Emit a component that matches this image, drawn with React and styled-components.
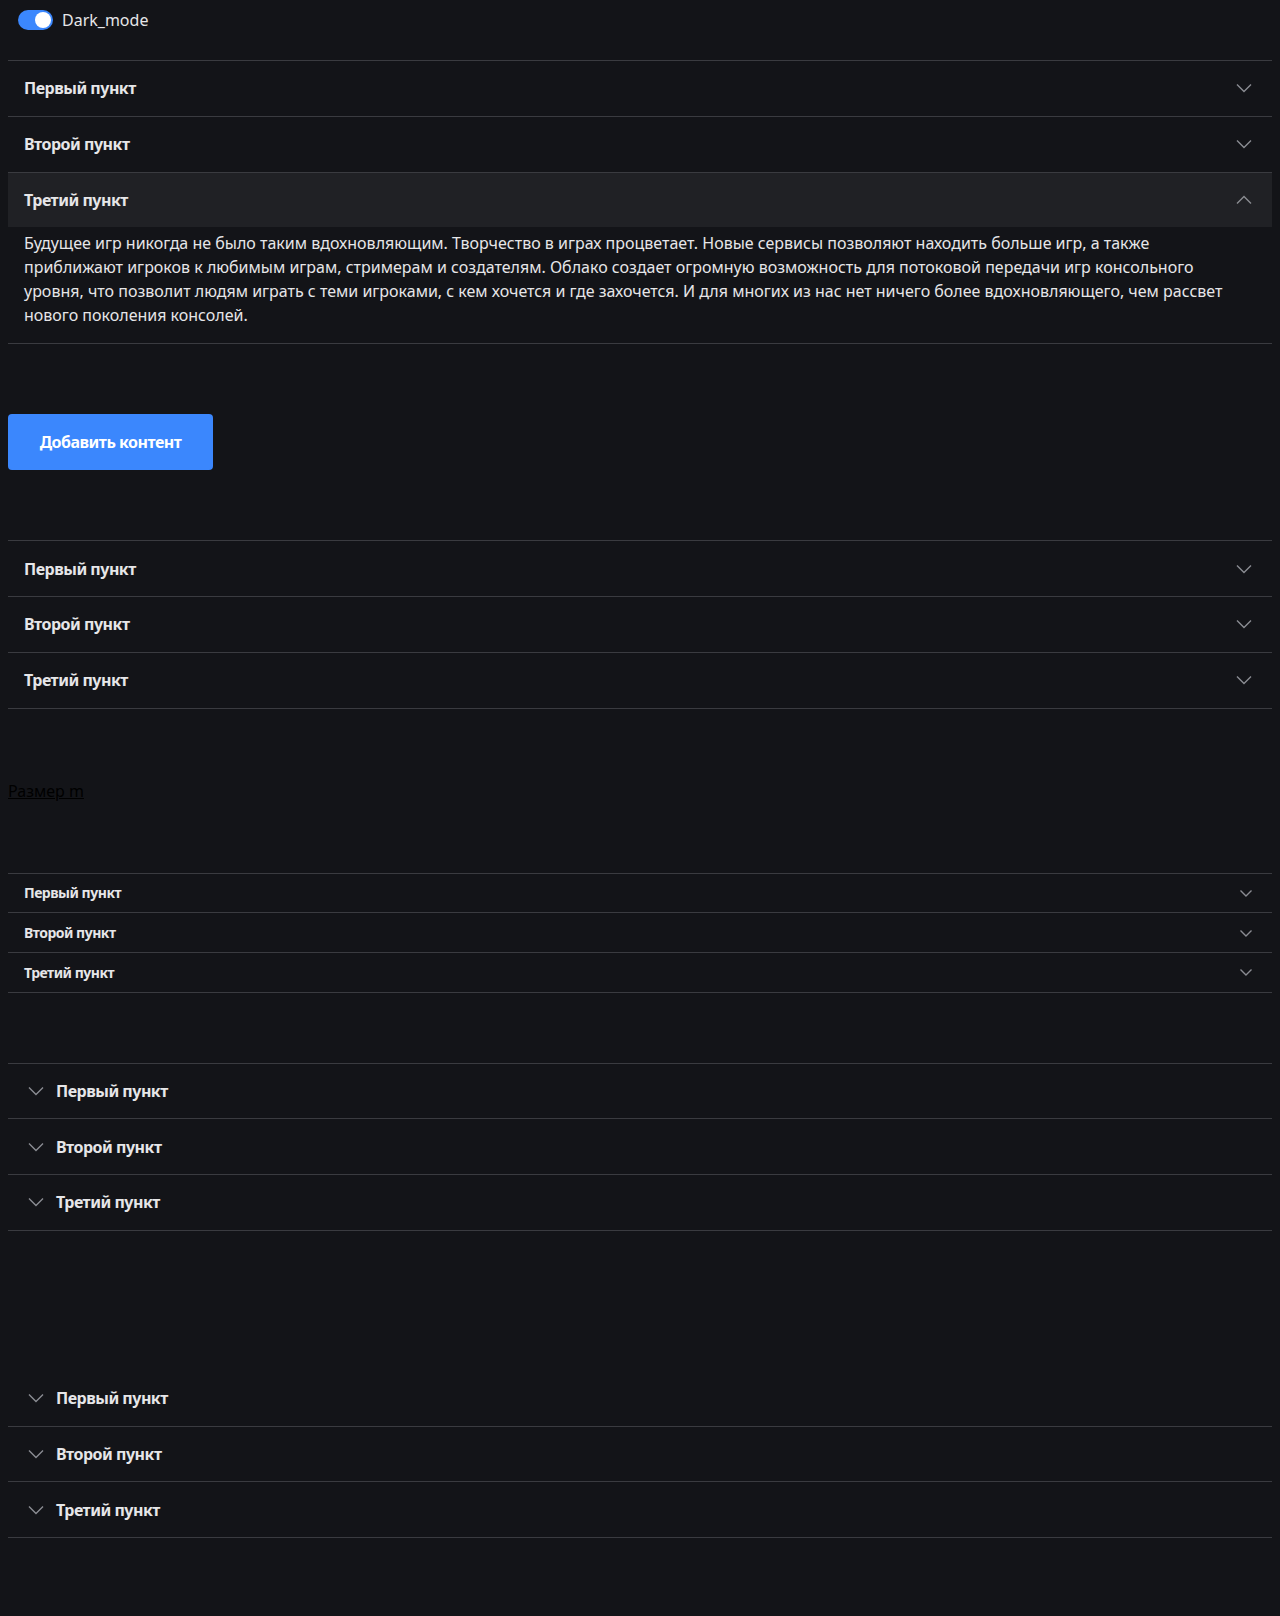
import React, { useState } from 'react';
import styled, { createGlobalStyle, css } from 'styled-components';

const GlobalStyle = createGlobalStyle`
  body {
    margin: 8px;
    background: #131418;
    color: #e6e6e8;
    font-family: "Noto Sans", "Open Sans", sans-serif;
  }
  * { box-sizing: border-box; }
`;

// --- Styled Components ---
const Page = styled.div`
  display: flex;
  flex-direction: column;
  gap: 70px;
  width: 1264px;
`;

const TopBar = styled.div`
  display: flex;
  align-items: flex-start;
  gap: 9px;
  height: 52px;
  padding: 2px 10px 0;
  margin-bottom: -70px;
`;

const Switch = styled.button`
  position: relative;
  width: 35px;
  height: 20px;
  border: none;
  border-radius: 10px;
  padding: 0;
  cursor: pointer;
  background: ${({ $on }) => ($on ? '#3b87fd' : '#4a4c52')};

  &::after {
    content: '';
    position: absolute;
    top: 2px;
    left: ${({ $on }) => ($on ? '17px' : '2px')};
    width: 16px;
    height: 16px;
    border-radius: 50%;
    background: #ffffff;
  }
`;

const SwitchLabel = styled.span`
  font-size: 16px;
  line-height: 20px;
  color: #e6e6e8;
`;

const List = styled.div`
  display: flex;
  flex-direction: column;
  border-top: ${({ $noTop }) => ($noTop ? 'none' : '1px solid #3a3b40')};
  margin-top: ${({ $extraTop }) => ($extraTop ? '70px' : '0')};
`;

const Item = styled.div`
  border-bottom: 1px solid #3a3b40;
`;

const Header = styled.button`
  display: flex;
  align-items: center;
  gap: 12px;
  width: 100%;
  border: none;
  cursor: pointer;
  text-align: left;
  font-family: inherit;
  font-weight: 700;
  letter-spacing: -0.5px;
  color: #e6e6e8;
  background: ${({ $open }) => ($open ? '#202125' : 'transparent')};
  height: ${({ $size }) => ($size === 's' ? '38.7px' : '54.75px')};
  font-size: ${({ $size }) => ($size === 's' ? '14px' : '16px')};
  padding: ${({ $iconLeft }) => ($iconLeft ? '0 20px' : '0 20px 0 16px')};
  ${({ $iconLeft }) =>
    $iconLeft &&
    css`
      flex-direction: row-reverse;
      justify-content: flex-end;
    `}
`;

const Title = styled.span`
  flex: ${({ $iconLeft }) => ($iconLeft ? '0 0 auto' : '1')};
`;

const Chevron = styled.svg`
  flex: 0 0 auto;
  transform: ${({ $open }) => ($open ? 'rotate(180deg)' : 'none')};
`;

const Content = styled.div`
  padding: 4px 40px 16px 16px;
  font-size: 16px;
  line-height: 24px;
  color: #e6e6e8;
`;

const PrimaryButton = styled.button`
  align-self: flex-start;
  width: 205px;
  height: 56px;
  border: none;
  border-radius: 4px;
  background: #3b87fd;
  color: #ffffff;
  font-family: inherit;
  font-size: 16px;
  font-weight: 700;
  letter-spacing: -0.5px;
  cursor: pointer;
`;

const SizeLink = styled.a`
  align-self: flex-start;
  font-size: 16px;
  line-height: 24px;
  color: #000000;
  text-decoration: underline;
`;
// --- End of Styled Components ---

const ITEMS = ['Первый пункт', 'Второй пункт', 'Третий пункт'];

const TEXT =
  'Будущее игр никогда не было таким вдохновляющим. Творчество в играх процветает. Новые сервисы позволяют находить больше игр, а также приближают игроков к любимым играм, стримерам и создателям. Облако создает огромную возможность для потоковой передачи игр консольного уровня, что позволит людям играть с теми игроками, с кем хочется и где захочется. И для многих из нас нет ничего более вдохновляющего, чем рассвет нового поколения консолей.';

const ChevronIcon = ({ size, open }) => {
  const s = size === 's' ? 12 : 16;
  const d = size === 's' ? 'M0.5 3.5 L6 9 L11.5 3.5' : 'M1 4.5 L8 11.5 L15 4.5';
  return (
    <Chevron $open={open} width={s} height={s} viewBox={`0 0 ${s} ${s}`} fill="none">
      <path d={d} stroke="#8a8c92" strokeWidth="1.4" />
    </Chevron>
  );
};

const Accordion = ({ size = 'l', iconLeft, noTop, extraTop, initialOpen = null }) => {
  const [openIndex, setOpenIndex] = useState(initialOpen);

  return (
    <List $noTop={noTop} $extraTop={extraTop}>
      {ITEMS.map((title, i) => {
        const open = openIndex === i;
        return (
          <Item key={title}>
            <Header
              $open={open}
              $size={size}
              $iconLeft={iconLeft}
              onClick={() => setOpenIndex(open ? null : i)}
            >
              <Title $iconLeft={iconLeft}>{title}</Title>
              <ChevronIcon size={size} open={open} />
            </Header>
            {open && <Content>{TEXT}</Content>}
          </Item>
        );
      })}
    </List>
  );
};

const App = () => {
  const [dark, setDark] = useState(true);

  return (
    <>
      <GlobalStyle />
      <Page>
        <TopBar>
          <Switch $on={dark} role="switch" aria-checked={dark} onClick={() => setDark(!dark)} />
          <SwitchLabel>Dark_mode</SwitchLabel>
        </TopBar>

        <Accordion initialOpen={2} />

        <PrimaryButton>Добавить контент</PrimaryButton>

        <Accordion />

        <SizeLink href="#">Размер m</SizeLink>

        <Accordion size="s" />

        <Accordion iconLeft />

        <Accordion iconLeft noTop extraTop />
      </Page>
    </>
  );
};

export default App;
